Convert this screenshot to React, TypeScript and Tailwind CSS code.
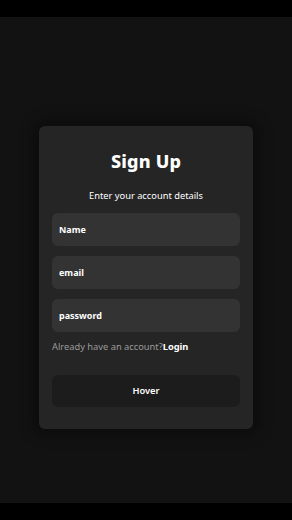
import React from "react";

export default function App() {
  return (
    <div className="w-[292px] h-[520px] bg-black flex flex-col" style={{ fontFamily: '"Noto Sans", Inter, sans-serif' }}>
      <div className="h-[17px] bg-black shrink-0" />
      <div className="flex-1 bg-[#121212] flex flex-col items-center pt-[109px]">
        <div className="w-[214px] rounded-[6px] bg-[#252525] shadow-[0_0_14px_6px_rgba(0,0,0,0.35)] px-[13px] pt-[20px] pb-[22px] flex flex-col">
          <h1 className="text-center text-white font-extrabold text-[18px] leading-[30px] tracking-[0.2px]">Sign Up</h1>
          <p className="text-center text-white text-[9.3px] leading-[14px] mt-[13px]">Enter your account details</p>
          <div className="flex flex-col gap-[10px] mt-[10px]">
            <div className="h-[33px] rounded-[6px] bg-[#333333] flex items-center px-[7px] text-white font-bold text-[9px]">Name</div>
            <div className="h-[33px] rounded-[6px] bg-[#333333] flex items-center px-[7px] text-white font-bold text-[9px]">email</div>
            <div className="h-[33px] rounded-[6px] bg-[#333333] flex items-center px-[7px] text-white font-bold text-[9px]">password</div>
          </div>
          <p className="mt-[8px] text-[9.3px] leading-[14px] text-[#9a9a9a]">Already have an account?<span className="text-white font-bold">Login</span></p>
          <div className="mt-[21px] h-[32px] rounded-[6px] bg-[#1c1c1c] flex items-center justify-center text-white font-semibold text-[9.3px]">Hover</div>
        </div>
      </div>
      <div className="h-[17px] bg-black shrink-0" />
    </div>
  );
}
